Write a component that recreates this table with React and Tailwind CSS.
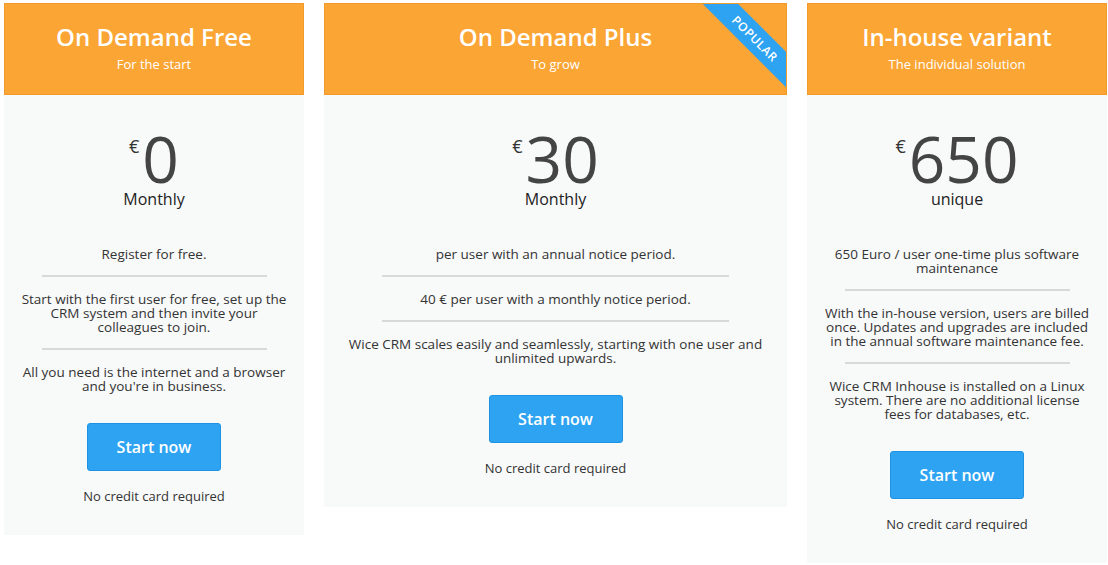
const plans = [
  {
    width: 'w-[300px]',
    textPad: 'px-[14px]',
    title: 'On Demand Free',
    subtitle: 'For the start',
    price: '0',
    period: 'Monthly',
    points: [
      ['Register for free.'],
      ['Start with the first user for free, set up the', 'CRM system and then invite your', 'colleagues to join.'],
      ['All you need is the internet and a browser', "and you're in business."],
    ],
  },
  {
    width: 'w-[463px]',
    textPad: 'px-[18px]',
    title: 'On Demand Plus',
    subtitle: 'To grow',
    price: '30',
    period: 'Monthly',
    popular: true,
    points: [
      ['per user with an annual notice period.'],
      ['40 € per user with a monthly notice period.'],
      ['Wice CRM scales easily and seamlessly, starting with one user and', 'unlimited upwards.'],
    ],
  },
  {
    width: 'w-[300px]',
    textPad: 'px-[14px]',
    title: 'In-house variant',
    subtitle: 'The individual solution',
    price: '650',
    period: 'unique',
    points: [
      ['650 Euro / user one-time plus software', 'maintenance'],
      ['With the in-house version, users are billed', 'once. Updates and upgrades are included', 'in the annual software maintenance fee.'],
      ['Wice CRM Inhouse is installed on a Linux', 'system. There are no additional license', 'fees for databases, etc.'],
    ],
  },
];

const PlanCard = ({ plan }) => (
  <div className={`${plan.width} shrink-0 flex flex-col`}>
    <div className="relative h-[92px] overflow-hidden bg-[#fba535] border border-[#f29a2b] flex flex-col items-center pt-[21px] text-white">
      <div className="text-[24px] leading-[24px] font-semibold">{plan.title}</div>
      <div className="mt-[9px] text-[13px] leading-[13px]">{plan.subtitle}</div>
      {plan.popular && (
        <div className="absolute left-[360px] top-[22px] w-[140px] h-[25px] rotate-45 bg-[#2ea3f2] flex items-center justify-center text-[12px] font-semibold tracking-[0.5px] text-white">
          POPULAR
        </div>
      )}
    </div>

    <div className="bg-[#f8f9f9] flex flex-col items-center pt-[32px] pb-[32px]">
      <div className="flex items-start text-[#444]">
        <span className="mt-[10px] mr-[3px] text-[18px] leading-[18px] text-[#333]">€</span>
        <span className="text-[64px] leading-[64px]">{plan.price}</span>
      </div>
      <div className="text-[16px] leading-[16px] text-[#222]">{plan.period}</div>

      <div className="mt-[25px] w-full flex flex-col items-center">
        {plan.points.map((lines, i) => (
          <div key={i} className="w-full flex flex-col items-center">
            {i > 0 && <div className="w-3/4 h-[2px] bg-[#d9d9d9]" />}
            <p className={`w-full ${plan.textPad} pt-[15px] pb-[14px] text-center text-[13.5px] leading-[14px] text-[#333]`}>
              {lines.map((line, j) => (
                <span key={j} className="block whitespace-nowrap">{line}</span>
              ))}
            </p>
          </div>
        ))}
      </div>

      <button className="mt-[16px] w-[134px] h-[48px] rounded-[3px] border border-[#1f93e3] bg-[#2ea3f2] text-white text-[16px] font-semibold">
        Start now
      </button>
      <div className="mt-[18px] text-[13px] leading-[14px] text-[#333]">No credit card required</div>
    </div>
  </div>
);

const App = () => (
  <div className="min-h-[565px] bg-white pl-[4px] pt-[3px] flex items-start gap-[20px] font-['Open_Sans',sans-serif]">
    {plans.map((plan) => (
      <PlanCard key={plan.title} plan={plan} />
    ))}
  </div>
);

export default App;
